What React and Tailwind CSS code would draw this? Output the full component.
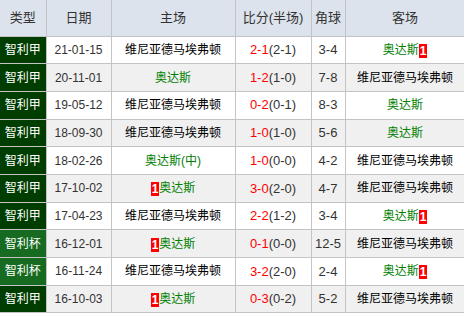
import React from 'react';

const HOME = '维尼亚德马埃弗顿';
const AWAY = '奥达斯';

const rows = [
  { type: '智利甲', date: '21-01-15', home: HOME, score: '2-1', half: '(2-1)', corner: '3-4', away: AWAY, card: 'away' },
  { type: '智利甲', date: '20-11-01', home: AWAY, score: '1-2', half: '(1-0)', corner: '7-8', away: HOME },
  { type: '智利甲', date: '19-05-12', home: HOME, score: '0-2', half: '(0-1)', corner: '8-3', away: AWAY },
  { type: '智利甲', date: '18-09-30', home: HOME, score: '1-0', half: '(1-0)', corner: '5-6', away: AWAY },
  { type: '智利甲', date: '18-02-26', home: '奥达斯(中)', score: '1-0', half: '(0-0)', corner: '4-2', away: HOME },
  { type: '智利甲', date: '17-10-02', home: AWAY, score: '3-0', half: '(2-0)', corner: '4-7', away: HOME, card: 'home' },
  { type: '智利甲', date: '17-04-23', home: HOME, score: '2-2', half: '(1-2)', corner: '3-4', away: AWAY, card: 'away' },
  { type: '智利杯', date: '16-12-01', home: AWAY, score: '0-1', half: '(0-0)', corner: '12-5', away: HOME, card: 'home' },
  { type: '智利杯', date: '16-11-24', home: HOME, score: '3-2', half: '(2-0)', corner: '2-4', away: AWAY, card: 'away' },
  { type: '智利甲', date: '16-10-03', home: AWAY, score: '0-3', half: '(0-2)', corner: '5-2', away: HOME, card: 'home' },
];

const RedCard = () => (
  <span className="inline-block bg-[#ff0000] text-white font-bold leading-[14px] px-[1px] text-[12px] align-[-1px]">1</span>
);

const Team = ({ name, card, side }) => {
  const isAway = name.startsWith('奥达斯');
  return (
    <span className={isAway ? 'text-[#008000]' : 'text-black'}>
      {card === 'home' && side === 'home' && <RedCard />}
      {name}
      {card === 'away' && side === 'away' && <RedCard />}
    </span>
  );
};

export default function App() {
  return (
    <div className="w-[464px] h-[313px] overflow-hidden bg-white">
      <table
        className="border-collapse text-center text-[12px] table-fixed w-[465px]"
        style={{ fontFamily: '"Liberation Sans", "Noto Sans CJK SC", sans-serif' }}
      >
        <colgroup>
          <col className="w-[46px]" />
          <col className="w-[65px]" />
          <col className="w-[124px]" />
          <col className="w-[76px]" />
          <col className="w-[34px]" />
          <col className="w-[120px]" />
        </colgroup>
        <thead>
          <tr className="h-[36px] bg-[#dde3ec] text-[#333] text-[13px]">
            {['类型', '日期', '主场', '比分(半场)', '角球', '客场'].map((h, i) => (
              <th key={h} className={`font-normal border border-[#c4c4c4] border-t-0 ${i === 0 ? 'border-l-0' : ''}`}>
                {h}
              </th>
            ))}
          </tr>
        </thead>
        <tbody>
          {rows.map((r, i) => (
            <tr key={i} className={`h-[27.7px] ${i % 2 === 1 ? 'bg-[#f0f0f0]' : 'bg-white'}`}>
              <td
                className={`border border-[#c4c4c4] border-l-0 text-white ${
                  r.type === '智利杯' ? 'bg-[#176b20]' : 'bg-[#003d00]'
                }`}
              >
                {r.type}
              </td>
              <td className="border border-[#c4c4c4] text-[#333]">{r.date}</td>
              <td className="border border-[#c4c4c4]">
                <Team name={r.home} card={r.card} side="home" />
              </td>
              <td className="border border-[#c4c4c4] text-[#333] text-[13px]">
                <span className="text-[#ff0000]">{r.score}</span>
                {r.half}
              </td>
              <td className="border border-[#c4c4c4] text-[#333] text-[13px]">{r.corner}</td>
              <td className="border border-[#c4c4c4]">
                <Team name={r.away} card={r.card} side="away" />
              </td>
            </tr>
          ))}
        </tbody>
      </table>
    </div>
  );
}
